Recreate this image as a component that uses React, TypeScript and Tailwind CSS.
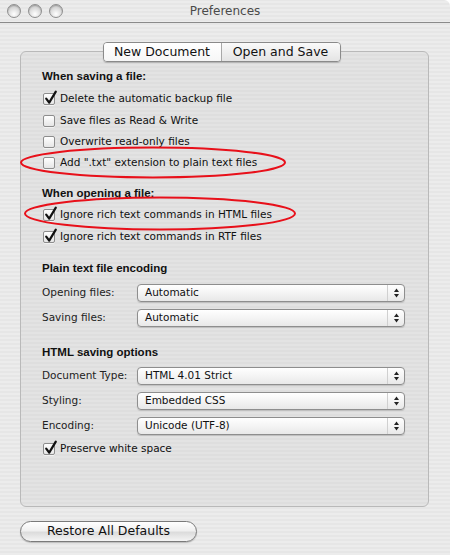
import React from "react";

function Check({ checked }: { checked?: boolean }) {
  return (
    <div className="relative w-[12px] h-[12px] shrink-0 rounded-[2px] border border-[#8d8d8d] bg-[linear-gradient(180deg,#ffffff,#e6e6e6)] shadow-[0_1px_0_rgba(255,255,255,0.6)]">
      {checked && (
        <svg className="absolute left-[0px] top-[-4px]" width="14" height="15" viewBox="0 0 14 15">
          <path d="M2.2 8.6 L5.2 12.6 L11.8 1.6" fill="none" stroke="#111" strokeWidth="2.2" strokeLinecap="round" strokeLinejoin="round" />
        </svg>
      )}
    </div>
  );
}

function CheckRow({ label, checked, mt }: { label: string; checked?: boolean; mt: string }) {
  return (
    <div className={`flex items-center h-[20px] pl-[1px] gap-[5px] ${mt}`}>
      <Check checked={checked} />
      <span className="text-[10.5px] text-[#111]">{label}</span>
    </div>
  );
}

function Heading({ label, mt }: { label: string; mt: string }) {
  return (
    <div className={`flex items-center h-[20px] ${mt}`}>
      <span
        className="text-[11.5px] font-bold text-[#111]"
        style={{ fontFamily: '"Liberation Sans", Arial, sans-serif' }}
      >
        {label}
      </span>
    </div>
  );
}

function Popup({ label, value, mt }: { label: string; value: string; mt: string }) {
  return (
    <div className={`flex items-center h-[20px] ${mt}`}>
      <span className="w-[95px] text-[10.5px] text-[#222]">{label}</span>
      <div className="flex items-center h-[18px] w-[268px] rounded-[4px] border border-[#8e8e8e] bg-[linear-gradient(180deg,#ffffff_0%,#f4f4f4_50%,#e8e8e8_100%)] shadow-[0_1px_1px_rgba(0,0,0,0.15)]">
        <span className="flex-1 pl-[7px] text-[10.5px] text-[#111]">{value}</span>
        <div className="flex h-full w-[17px] items-center justify-center border-l border-[#d0d0d0]">
          <svg width="7" height="10" viewBox="0 0 7 10">
            <path d="M3.5 0.5 L6 4 L1 4 Z" fill="#222" />
            <path d="M3.5 9.5 L6 6 L1 6 Z" fill="#222" />
          </svg>
        </div>
      </div>
    </div>
  );
}

function Light() {
  return (
    <div className="w-[14px] h-[14px] rounded-full border border-[#8f8f8f] bg-[radial-gradient(circle_at_50%_75%,#ffffff_0%,#e4e4e4_40%,#b9b9b9_100%)] shadow-[inset_0_1px_1px_rgba(0,0,0,0.2)]" />
  );
}

export default function App() {
  return (
    <div
      className="relative w-[450px] h-[555px] overflow-hidden bg-[repeating-linear-gradient(0deg,#ececec_0px,#ececec_2px,#e6e6e6_2px,#e6e6e6_4px)] rounded-tr-[6px]"
      style={{ fontFamily: '"DejaVu Sans", "Liberation Sans", sans-serif' }}
    >
      {/* Title bar */}
      <div className="grid grid-cols-[1fr_auto_1fr] items-center h-[23px] border-b border-[#8a8a8a]">
        <div className="flex items-center gap-[7px] pl-[7px]">
          <Light />
          <Light />
          <Light />
        </div>
        <span className="text-[12px] text-[#4a4a4a]">Preferences</span>
        <div />
      </div>

      <div className="px-[20px]">
        {/* Tabs */}
        <div className="relative z-10 flex justify-center mt-[19px] pr-[7px]">
          <div className="flex h-[20px] rounded-[4px] border border-[#8a8a8a] shadow-[0_1px_1px_rgba(0,0,0,0.2)] overflow-hidden">
            <div className="flex items-center justify-center w-[118px] bg-[linear-gradient(180deg,#ffffff,#f6f6f6)] border-r border-[#a8a8a8] text-[12.5px] text-[#111]">
              New Document
            </div>
            <div className="flex items-center justify-center w-[118px] bg-[linear-gradient(180deg,#fafafa,#e4e4e4)] text-[12.5px] text-[#111]">
              Open and Save
            </div>
          </div>
        </div>

        {/* Group box */}
        <div className="-mt-[11px] h-[456px] w-[409px] rounded-[6px] border border-[#b9b9b9] bg-[repeating-linear-gradient(0deg,#e3e3e3_0px,#e3e3e3_2px,#dedede_2px,#dedede_4px)] pl-[21px] pt-[15px]">
          <Heading label="When saving a file:" mt="mt-0" />
          <CheckRow label="Delete the automatic backup file" checked mt="mt-[2px]" />
          <CheckRow label="Save files as Read & Write" mt="mt-[2px]" />
          <CheckRow label="Overwrite read-only files" mt="mt-[1px]" />
          <CheckRow label={'Add ".txt" extension to plain text files'} mt="mt-[1px]" />
          <Heading label="When opening a file:" mt="mt-[11px]" />
          <CheckRow label="Ignore rich text commands in HTML files" checked mt="mt-[1px]" />
          <CheckRow label="Ignore rich text commands in RTF files" checked mt="mt-[2px]" />
          <Heading label="Plain text file encoding" mt="mt-[12px]" />
          <Popup label="Opening files:" value="Automatic" mt="mt-[4px]" />
          <Popup label="Saving files:" value="Automatic" mt="mt-[5px]" />
          <Heading label="HTML saving options" mt="mt-[15px]" />
          <Popup label="Document Type:" value="HTML 4.01 Strict" mt="mt-[3px]" />
          <Popup label="Styling:" value="Embedded CSS" mt="mt-[5px]" />
          <Popup label="Encoding:" value="Unicode (UTF-8)" mt="mt-[5px]" />
          <CheckRow label="Preserve white space" checked mt="mt-[3px]" />
        </div>

        {/* Button */}
        <div className="mt-[14px] flex items-center justify-center h-[21px] w-[177px] rounded-full border border-[#7a7a7a] bg-[linear-gradient(180deg,#ffffff_0%,#f0f0f0_45%,#dcdcdc_55%,#f4f4f4_100%)] shadow-[0_1px_1px_rgba(0,0,0,0.2)] text-[12.5px] text-[#111]">
          Restore All Defaults
        </div>
      </div>

      {/* Annotation ellipses */}
      <svg className="absolute left-0 top-0 pointer-events-none" width="450" height="555">
        <ellipse cx="153" cy="162.5" rx="132" ry="15" fill="none" stroke="#e8101a" strokeWidth="2" />
        <ellipse cx="160" cy="213.5" rx="135" ry="16" fill="none" stroke="#e8101a" strokeWidth="2" />
      </svg>
    </div>
  );
}
